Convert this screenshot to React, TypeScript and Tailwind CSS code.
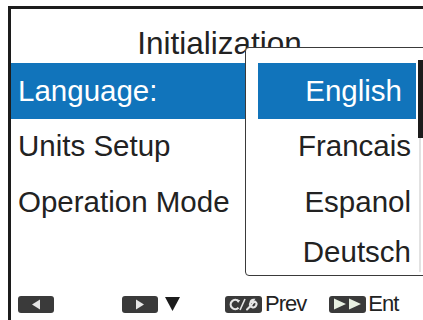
const Btn: React.FC<{ children: React.ReactNode; w?: string }> = ({ children, w = "w-[36px]" }) => (
  <div className={`flex h-[17px] ${w} items-center justify-center rounded-[3px] bg-[#3a3a3a]`}>
    {children}
  </div>
);

const rows = ["Language:", "Units Setup", "Operation Mode"];
const langs = ["English", "Francais", "Espanol", "Deutsch"];

export default function App() {
  return (
    <div className="relative h-[320px] w-[423px] overflow-hidden bg-white font-['Liberation_Sans',Arial,sans-serif] text-[#222]">
      <div className="pl-[8px] pt-[6px]">
        <div className="flex h-[314px] flex-col border-l-[3px] border-t-[3px] border-[#1c1c1c]">
          <div className="flex h-[54px] items-end justify-center pb-[2px] pl-[5px] text-[31.5px] leading-[36px]">
            Initialization
          </div>
          {rows.map((r, i) => (
            <div
              key={r}
              className={`flex h-[55.5px] items-center pl-[7px] text-[29.5px] ${
                i === 0 ? "w-[235px] bg-[#1174bb] text-white" : ""
              }`}
            >
              {r}
            </div>
          ))}
          <div className="flex-1" />
          {/* footer keys */}
          <div className="flex h-[25px] items-center pb-[7px] text-[22px] leading-none">
            <div className="ml-[7px]">
              <Btn>
                <svg width="10" height="11" viewBox="0 0 10 11">
                  <path d="M9 0.5 L1 5.5 L9 10.5 Z" fill="#e6e6e6" />
                </svg>
              </Btn>
            </div>
            <div className="ml-[68px]">
              <Btn>
                <svg width="10" height="11" viewBox="0 0 10 11">
                  <path d="M1 0.5 L9 5.5 L1 10.5 Z" fill="#e6e6e6" />
                </svg>
              </Btn>
            </div>
            <svg className="ml-[7px]" width="15" height="14" viewBox="0 0 15 14">
              <path d="M0 0 L15 0 L7.5 14 Z" fill="#1c1c1c" />
            </svg>
            <div className="ml-[45px]">
              <Btn w="w-[37px]">
                <svg width="32" height="15" viewBox="0 0 32 15">
                  <path
                    d="M10.5 4.2 A4.6 4.6 0 1 0 10.5 10.8"
                    fill="none"
                    stroke="#e6e6e6"
                    strokeWidth="2.2"
                  />
                  <path d="M8.5 2.2 L12.2 3.2 L10 6 Z" fill="#e6e6e6" />
                  <path d="M12 13 L17 2" stroke="#e6e6e6" strokeWidth="1.6" />
                  <path
                    d="M19 12.5 L24 7.5 M22.5 5.5 A3.2 3.2 0 1 0 27 4.5 L25 6 L24 5 L25.5 2.8 A3.2 3.2 0 0 0 22.5 5.5"
                    fill="none"
                    stroke="#e6e6e6"
                    strokeWidth="2"
                    strokeLinecap="round"
                  />
                </svg>
              </Btn>
            </div>
            <span className="ml-[3px] tracking-[-1px]">Prev</span>
            <div className="ml-[23px]">
              <Btn w="w-[37px]">
                <svg width="30" height="12" viewBox="0 0 30 12">
                  <path d="M1 0.5 L13 6 L1 11.5 Z M16 0.5 L28 6 L16 11.5 Z" fill="#e8f0e2" />
                </svg>
              </Btn>
            </div>
            <span className="ml-[2px] tracking-[-1px]">Ent</span>
          </div>
        </div>
      </div>

      {/* language dropdown */}
      <div className="absolute left-[245px] top-[47px] h-[229px] w-[200px] rounded-[4px] border border-[#3a3a3a] bg-white">
        <div className="flex flex-col pl-[12px] pt-[15px]">
          {langs.map((l, i) => (
            <div
              key={l}
              className={`flex w-[158px] items-center justify-end text-[29.5px] ${
                i === 0 ? "bg-[#1174bb] pr-[14px] text-white" : "pr-[5px]"
              } ${i === 3 ? "h-[45px]" : "h-[55.5px]"}`}
            >
              {l}
            </div>
          ))}
        </div>
        <div className="absolute left-[172px] top-[12px] h-[78px] w-[6px] bg-[#1c1c1c]" />
        <div className="absolute left-[173px] top-[90px] h-[134px] w-[2px] bg-[#e2e2e2]" />
      </div>
    </div>
  );
}
